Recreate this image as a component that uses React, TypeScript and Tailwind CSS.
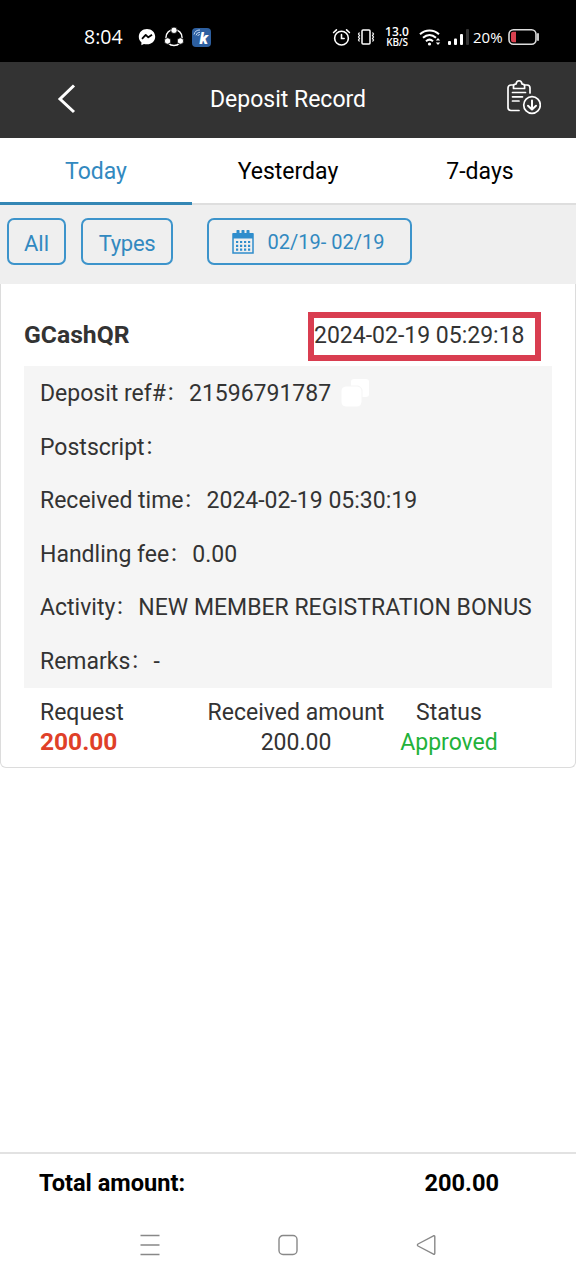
import type { ReactNode } from 'react';

const tabs = ['Today', 'Yesterday', '7-days'];

const details = [
  { label: 'Deposit ref#', value: '21596791787', copy: true },
  { label: 'Postscript', value: '' },
  { label: 'Received time', value: '2024-02-19 05:30:19' },
  { label: 'Handling fee', value: '0.00' },
  { label: 'Activity', value: 'NEW MEMBER REGISTRATION BONUS' },
  { label: 'Remarks', value: '-' },
];

function StatusBar() {
  return (
    <div className="flex h-[62px] shrink-0 items-center bg-black pt-3 pr-[36px] pl-[84px] text-white">
      <span className="w-[54px] font-['Open_Sans'] text-[19.5px] leading-none whitespace-nowrap">8:04</span>
      {/* Messenger */}
      <svg className="shrink-0" width="18" height="18" viewBox="0 0 18 18">
        <path d="M9 1C4.300 1 .8 4.400.8 8.700c0 2.400 1 4.300 2.600 5.600v2.900l2.500-1.300c1 .3 2 .4 3.100.4 4.700 0 8.200-3.300 8.200-7.600S13.700 1 9 1z" fill="#fff" />
        <path d="M4 10.800l3.700-3.900 2.600 2.400L14 6.800" fill="none" stroke="#000" strokeWidth="1.800" strokeLinejoin="round" />
      </svg>
      {/* Share circle */}
      <svg className="ml-[8px] shrink-0" width="20" height="20" viewBox="0 0 20 20">
        <circle cx="10" cy="10.500" r="8" fill="none" stroke="#fff" strokeWidth="1.500" />
        <g fill="#fff" stroke="#000" strokeWidth="0.800">
          <circle cx="10" cy="3.300" r="3.200" />
          <circle cx="3.600" cy="14" r="3.200" />
          <circle cx="16.400" cy="14" r="3.200" />
        </g>
      </svg>
      <div className="relative ml-[8px] h-[19px] w-[19px] shrink-0 rounded-[4px] bg-[#2d5fa0]">
        <svg className="absolute top-0 left-0" width="19" height="19" viewBox="0 0 19 19" fill="none" stroke="#c5d9f2" strokeWidth="1">
          <path d="M2 6.500a6 6 0 0 1 6-4.500M4 7.300a4 4 0 0 1 4-3M5.800 8a2 2 0 0 1 2-1.500" />
        </svg>
        <span className="absolute right-[3px] bottom-0 font-[Roboto] text-[16px] leading-none font-black italic">k</span>
      </div>

      <div className="ml-auto flex items-center">
        <svg width="19" height="19" viewBox="0 0 18 18" fill="none" stroke="#fff" strokeWidth="1.500" strokeLinecap="round">
          <circle cx="9" cy="9.600" r="6.500" />
          <path d="M9 6.300v3.600h2.500M1.500 4.300l2.700-2.500M16.500 4.300l-2.700-2.500" />
        </svg>
        <svg className="ml-[6px]" width="18" height="18" viewBox="0 0 18 18" fill="none" stroke="#fff" strokeWidth="1.500">
          <rect x="5" y="2" width="8" height="14" rx="1" />
          <path d="M2.500 4.500l-1 1.500 1 1.500-1 1.500 1 1.500-1 1.500 1 1.500M15.500 4.500l1 1.500-1 1.500 1 1.500-1 1.500 1 1.500-1 1.500" strokeWidth="1.200" />
        </svg>
        <div className="ml-[9px] flex w-[26px] flex-col items-center font-['Open_Sans'] font-semibold whitespace-nowrap">
          <span className="text-[12px] leading-[11px]">13.0</span>
          <span className="text-[10px] leading-[11px] tracking-[-0.2px]">KB/S</span>
        </div>
        <svg className="ml-[9px]" width="23" height="19" viewBox="0 0 23 19" fill="none" stroke="#fff" strokeWidth="2">
          <path d="M1 6.300c5.500-5 13.500-5 19 0M4 9.800c4-3.600 9-3.600 13 0M7 13.200c2.200-2 4.800-2 7 0" />
          <circle cx="10.500" cy="16" r="1.600" fill="#fff" stroke="none" />
          <path d="M16.800 12.500l2.200-2.500 2.200 2.500zM16.800 14.500l2.200 2.500 2.200-2.500z" fill="#fff" stroke="none" />
        </svg>
        <svg className="ml-[6px]" width="21" height="18" viewBox="0 0 21 18" fill="#fff">
          <rect x="0" y="13" width="3" height="4" rx="1" />
          <rect x="6" y="10.500" width="3" height="6.500" rx="1" />
          <rect x="12" y="6" width="3" height="11" rx="1" />
          <rect x="18" y="1" width="3" height="16" rx="1" fill="#333" />
        </svg>
        <span className="ml-[4px] w-[31px] font-['Open_Sans'] text-[15px] leading-none font-medium whitespace-nowrap">20%</span>
        <svg className="ml-[4px]" width="32" height="18" viewBox="0 0 32 18">
          <rect x="1" y="1.800" width="27" height="14.400" rx="4.500" fill="none" stroke="#ddd" strokeWidth="1.600" />
          <path d="M5 3.800h3v10.400H5a2 2 0 0 1-2-2V5.800a2 2 0 0 1 2-2z" fill="#d8414f" />
          <path d="M30 6v6" stroke="#ddd" strokeWidth="1.800" strokeLinecap="round" />
        </svg>
      </div>
    </div>
  );
}

function Header() {
  return (
    <header className="grid h-[76px] shrink-0 grid-cols-3 items-center bg-[#333333] text-white">
      <svg className="mb-[5px] ml-[56px]" width="22" height="32" viewBox="0 0 22 32" fill="none" stroke="#fff" strokeWidth="3">
        <path d="M18 3.500L4 17l14 13" />
      </svg>
      <h1 className="text-center whitespace-nowrap">Deposit Record</h1>
      <svg className="mr-[35px] mb-[7px] justify-self-end" width="37" height="38" viewBox="0 0 37 38" fill="none" stroke="#fff" strokeWidth="1.700" strokeLinecap="round" strokeLinejoin="round">
        <path d="M15 32.500H7a3 3 0 0 1-3-3V10a3 3 0 0 1 3-3h2.500M20.500 7H23a3 3 0 0 1 3 3v5" />
        <path d="M9.500 10.500V8q0-1.800 2-1.800h.5c.7-4.600 5.400-4.600 6.100 0h.5q2 0 2 1.800v2.500z" />
        <path d="M8.500 14.500h13M8.500 18.800h10M8.500 23h6.500" />
        <circle cx="28" cy="27" r="8.300" />
        <path d="M28 22.500v8.500M24 27.700l4 3.800 4-3.800" strokeWidth="2" />
      </svg>
    </header>
  );
}

function FilterButton({ className, children }: { className: string; children: ReactNode }) {
  return (
    <button className={`flex h-[47px] items-center justify-center rounded-[7px] border-2 border-[#3d94cb] text-[22px] text-[#3289c0] ${className}`}>
      {children}
    </button>
  );
}

function CalendarIcon() {
  return (
    <svg width="22" height="24" viewBox="0 0 22 24" fill="none" stroke="#2f8dcc">
      <rect x="1" y="4" width="20" height="19" strokeWidth="1.500" />
      <path d="M1 3h20v5.500H1z" fill="#2f8dcc" stroke="none" />
      <path d="M6 1v4M11 1v4M16 1v4" strokeWidth="3" strokeLinecap="round" />
      <path d="M4 12h15M4 15.800h15M4 19.600h15" strokeWidth="2.200" strokeDasharray="2.200 1.800" />
    </svg>
  );
}

export default function App() {
  return (
    <div className="flex h-[1280px] w-[576px] flex-col overflow-hidden bg-white font-[Roboto,'Noto_Sans_CJK_SC',sans-serif] text-[23px] text-[#333333]">
      <StatusBar />
      <Header />

      <nav className="grid h-[67px] shrink-0 grid-cols-3 text-black">
        {tabs.map((tab, i) => (
          <button
            key={tab}
            className={i === 0 ? 'border-b-[3px] border-[#3487b5] pt-1 text-[#3289c0]' : 'border-b-2 border-[#dedede] pt-1 pb-px'}
          >
            {tab}
          </button>
        ))}
      </nav>

      <div className="flex h-[79px] shrink-0 bg-[#efefef] pt-[13px] pl-[7px]">
        <FilterButton className="w-[59px] pt-[3px]">All</FilterButton>
        <FilterButton className="ml-[15px] w-[92px] pt-[3px]">
          <span className="tracking-[-0.3px]">Types</span>
        </FilterButton>
        <FilterButton className="ml-[34px] w-[205px] pr-[3px]">
          <CalendarIcon />
          <span className="ml-[14px] text-[20px] whitespace-nowrap">02/19- 02/19</span>
        </FilterButton>
      </div>

      {/* Record card */}
      <section className="h-[484px] shrink-0 rounded-b-[6px] border border-t-0 border-[#dcdcdc] px-[23px]">
        <div className="flex h-[82px] justify-between pt-[28px]">
          <h2 className="pt-[6px] text-[24.7px] leading-[34px] font-bold">GCashQR</h2>
          <div className="mr-[11px] h-[49px] w-[233px] border-[6px] border-[#d93d50] leading-[36px] whitespace-nowrap">
            2024-02-19 05:29:18
          </div>
        </div>

        <dl className="flex h-[322px] flex-col bg-[#f5f5f5] pt-px pl-4">
          {details.map((row) => (
            <div key={row.label} className="flex h-[53.8px] leading-[53px] whitespace-nowrap">
              <dt>{row.label}</dt>
              <dd className="w-[23px] text-[19px]">：</dd>
              <dd>{row.value}</dd>
              {row.copy && (
                <svg className="mt-[12px] ml-[10px]" width="28" height="28" viewBox="0 0 28 28" fill="#fff">
                  <rect x="10" y="0" width="18" height="18" rx="3" />
                  <rect x="0" y="7" width="21" height="21" rx="5" stroke="#f5f5f5" />
                </svg>
              )}
            </div>
          ))}
        </dl>

        <div className="flex pt-[10px] pl-4 leading-[30px] whitespace-nowrap">
          <div className="w-[167px]">
            <p>Request</p>
            <p className="text-[24.5px] leading-[28px] font-bold text-[#df4028]">200.00</p>
          </div>
          <div className="w-[178px] text-center">
            <p>Received amount</p>
            <p>200.00</p>
          </div>
          <div className="ml-[14px] w-[100px] text-center">
            <p>Status</p>
            <p className="text-[#22b23a]">Approved</p>
          </div>
        </div>
      </section>

      <footer className="mt-auto flex h-[58px] shrink-0 justify-between border-t-2 border-[#e2e2e2] pr-[77px] pl-[39px] text-[23.6px] leading-[58px] font-bold text-black">
        <span>Total amount:</span>
        <span>200.00</span>
      </footer>

      <div className="flex h-[70px] shrink-0 items-center justify-between px-[140px] text-[#888888]">
        <svg width="20" height="22" viewBox="0 0 20 22" stroke="currentColor" strokeWidth="1.500">
          <path d="M.5 1.500h19M.5 11h19M.5 20.500h19" />
        </svg>
        <svg width="20" height="22" viewBox="0 0 20 22" fill="none" stroke="currentColor" strokeWidth="1.400">
          <rect x="1" y="1.500" width="18" height="19" rx="4" />
        </svg>
        <svg width="20" height="22" viewBox="0 0 20 22" fill="none" stroke="currentColor" strokeWidth="1.400" strokeLinejoin="round">
          <path d="M17.500 1.800L2 10q-1.200 1 0 2l15.500 8.200q1.300.3 1.300-1V2.800q0-1.300-1.300-1z" />
        </svg>
      </div>
    </div>
  );
}
